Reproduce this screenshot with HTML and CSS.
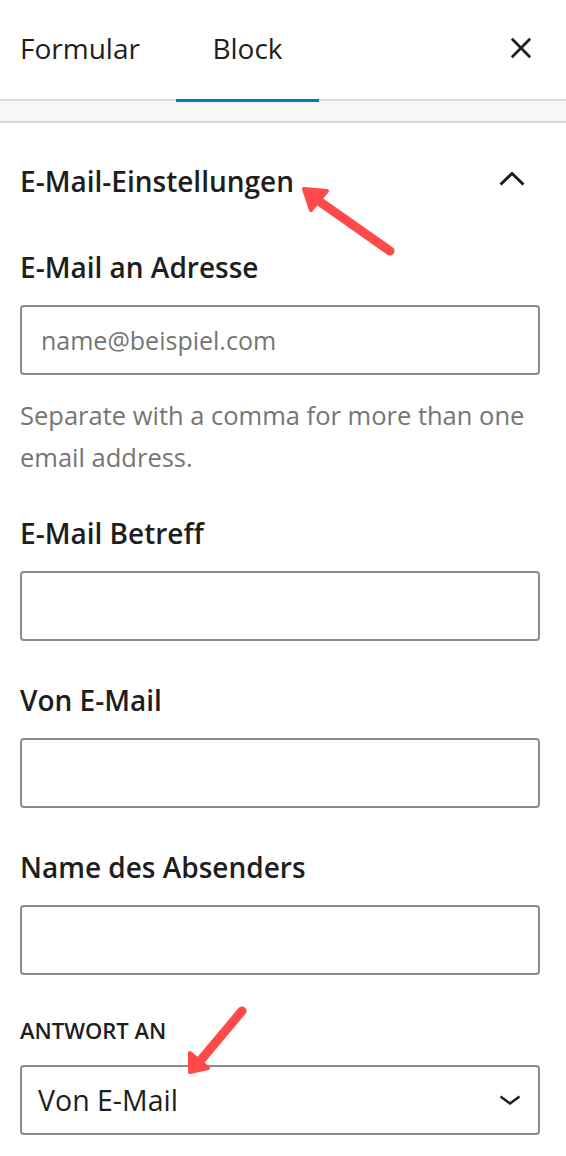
FILE: index.html
```html
<!DOCTYPE html>
<html lang="de">
<head>
<meta charset="utf-8">
<title>Block Einstellungen</title>
<link rel="stylesheet" href="styles.css">
</head>
<body>
<div class="sidebar">
  <div class="tabs">
    <div class="tab tab-form">Formular</div>
    <div class="tab tab-block active">Block</div>
    <div class="tab-close">
      <svg width="24" height="24" viewBox="0 0 24 24"><path d="M2 2 L22 22 M22 2 L2 22" stroke="#1e1e1e" stroke-width="3" fill="none"/></svg>
    </div>
  </div>
  <div class="band"></div>
  <div class="panel">
    <div class="panel-head">
      <span class="panel-title">E-Mail-Einstellungen</span>
      <svg class="chev-up" width="26" height="14" viewBox="0 0 26 14"><polyline points="1.5,12.5 13,1.5 24.5,12.5" stroke="#1e1e1e" stroke-width="3" fill="none"/></svg>
    </div>
    <div class="field field-first">
      <label class="label">E-Mail an Adresse</label>
      <div class="input"><span class="placeholder">name@beispiel.com</span></div>
      <p class="help">Separate with a comma for more than one email address.</p>
    </div>
    <div class="field field-after-help">
      <label class="label">E-Mail Betreff</label>
      <div class="input"></div>
    </div>
    <div class="field">
      <label class="label">Von E-Mail</label>
      <div class="input"></div>
    </div>
    <div class="field">
      <label class="label">Name des Absenders</label>
      <div class="input"></div>
    </div>
    <div class="field field-select">
      <label class="label-caps">ANTWORT AN</label>
      <div class="select">
        <span class="select-value">Von E-Mail</span>
        <svg width="22" height="10" viewBox="0 0 22 10"><polyline points="1.5,1.5 11,8.5 20.5,1.5" stroke="#1e1e1e" stroke-width="2.5" fill="none"/></svg>
      </div>
    </div>
  </div>
</div>
<svg class="annotations" width="566" height="1156" viewBox="0 0 566 1156">
  <g stroke="#ff4a4a" fill="#ff4a4a" stroke-linecap="round" stroke-linejoin="round">
    <line x1="390" y1="251" x2="316" y2="199" stroke-width="9"/>
    <polygon points="304,189 327,191 311,210" stroke-width="4"/>
    <line x1="242" y1="1011" x2="200" y2="1061" stroke-width="9"/>
    <polygon points="190,1072 190,1053 208,1068" stroke-width="4"/>
  </g>
</svg>
</body>
</html>
```
FILE: styles.css
```css
html, body {
  margin: 0;
  padding: 0;
  background: #ffffff;
}
body {
  font-family: "Open Sans", "Noto Sans", sans-serif;
  color: #1e1e1e;
  position: relative;
  width: 566px;
  height: 1156px;
  overflow: hidden;
}
.tabs {
  height: 101px;
  box-sizing: border-box;
  border-bottom: 2px solid #dddddd;
  display: flex;
  align-items: stretch;
}
.tab {
  display: flex;
  align-items: center;
  font-size: 28px;
  font-weight: 500;
  color: #1e1e1e;
  position: relative;
  padding-bottom: 4px;
}
.tab-form {
  padding-left: 20px;
  width: 156px;
}
.tab-block {
  width: 143px;
  justify-content: center;
}
.tab-block.active::after {
  content: "";
  position: absolute;
  left: 0;
  right: 0;
  bottom: -3px;
  height: 3px;
  background: #007cba;
}
.tab-close {
  margin-left: auto;
  width: 56px;
  display: flex;
  align-items: center;
  padding-bottom: 4px;
}
.tab-close svg {
  width: 22px;
  height: 22px;
}
.band {
  height: 20px;
  background: #f7f7f7;
  border-bottom: 2px solid #cfd6de;
}
.panel {
  padding: 0 26px 0 20px;
}
.panel-head {
  padding-top: 40px;
  height: 36px;
  display: flex;
  align-items: center;
  justify-content: space-between;
}
.panel-title {
  font-size: 28px;
  font-weight: 600;
  line-height: 36px;
}
.chev-up {
  margin-right: 15px;
  margin-top: -4px;
}
.field {
  margin-top: 41px;
}
.field-first {
  margin-top: 50px;
}
.field-after-help {
  margin-top: 37px;
}
.field-select {
  margin-top: 37px;
}
.label {
  display: block;
  font-size: 28px;
  font-weight: 600;
  line-height: 36px;
  margin-bottom: 20px;
}
.label-caps {
  display: block;
  font-size: 22px;
  font-weight: 600;
  line-height: 36px;
  margin-bottom: 17px;
}
.input, .select {
  box-sizing: border-box;
  height: 70px;
  width: 520px;
  border: 2px solid #8c8c8c;
  border-radius: 4px;
  display: flex;
  align-items: center;
}
.placeholder {
  padding-left: 19px;
  font-size: 25px;
  color: #757575;
}
.help {
  margin: 19px 0 0;
  font-size: 25.5px;
  line-height: 42px;
  color: #757575;
}
.select {
  justify-content: space-between;
  padding: 0 17px 0 16px;
}
.select-value {
  font-size: 28.5px;
  color: #1e1e1e;
}
.annotations {
  position: absolute;
  top: 0;
  left: 0;
  pointer-events: none;
}
```
